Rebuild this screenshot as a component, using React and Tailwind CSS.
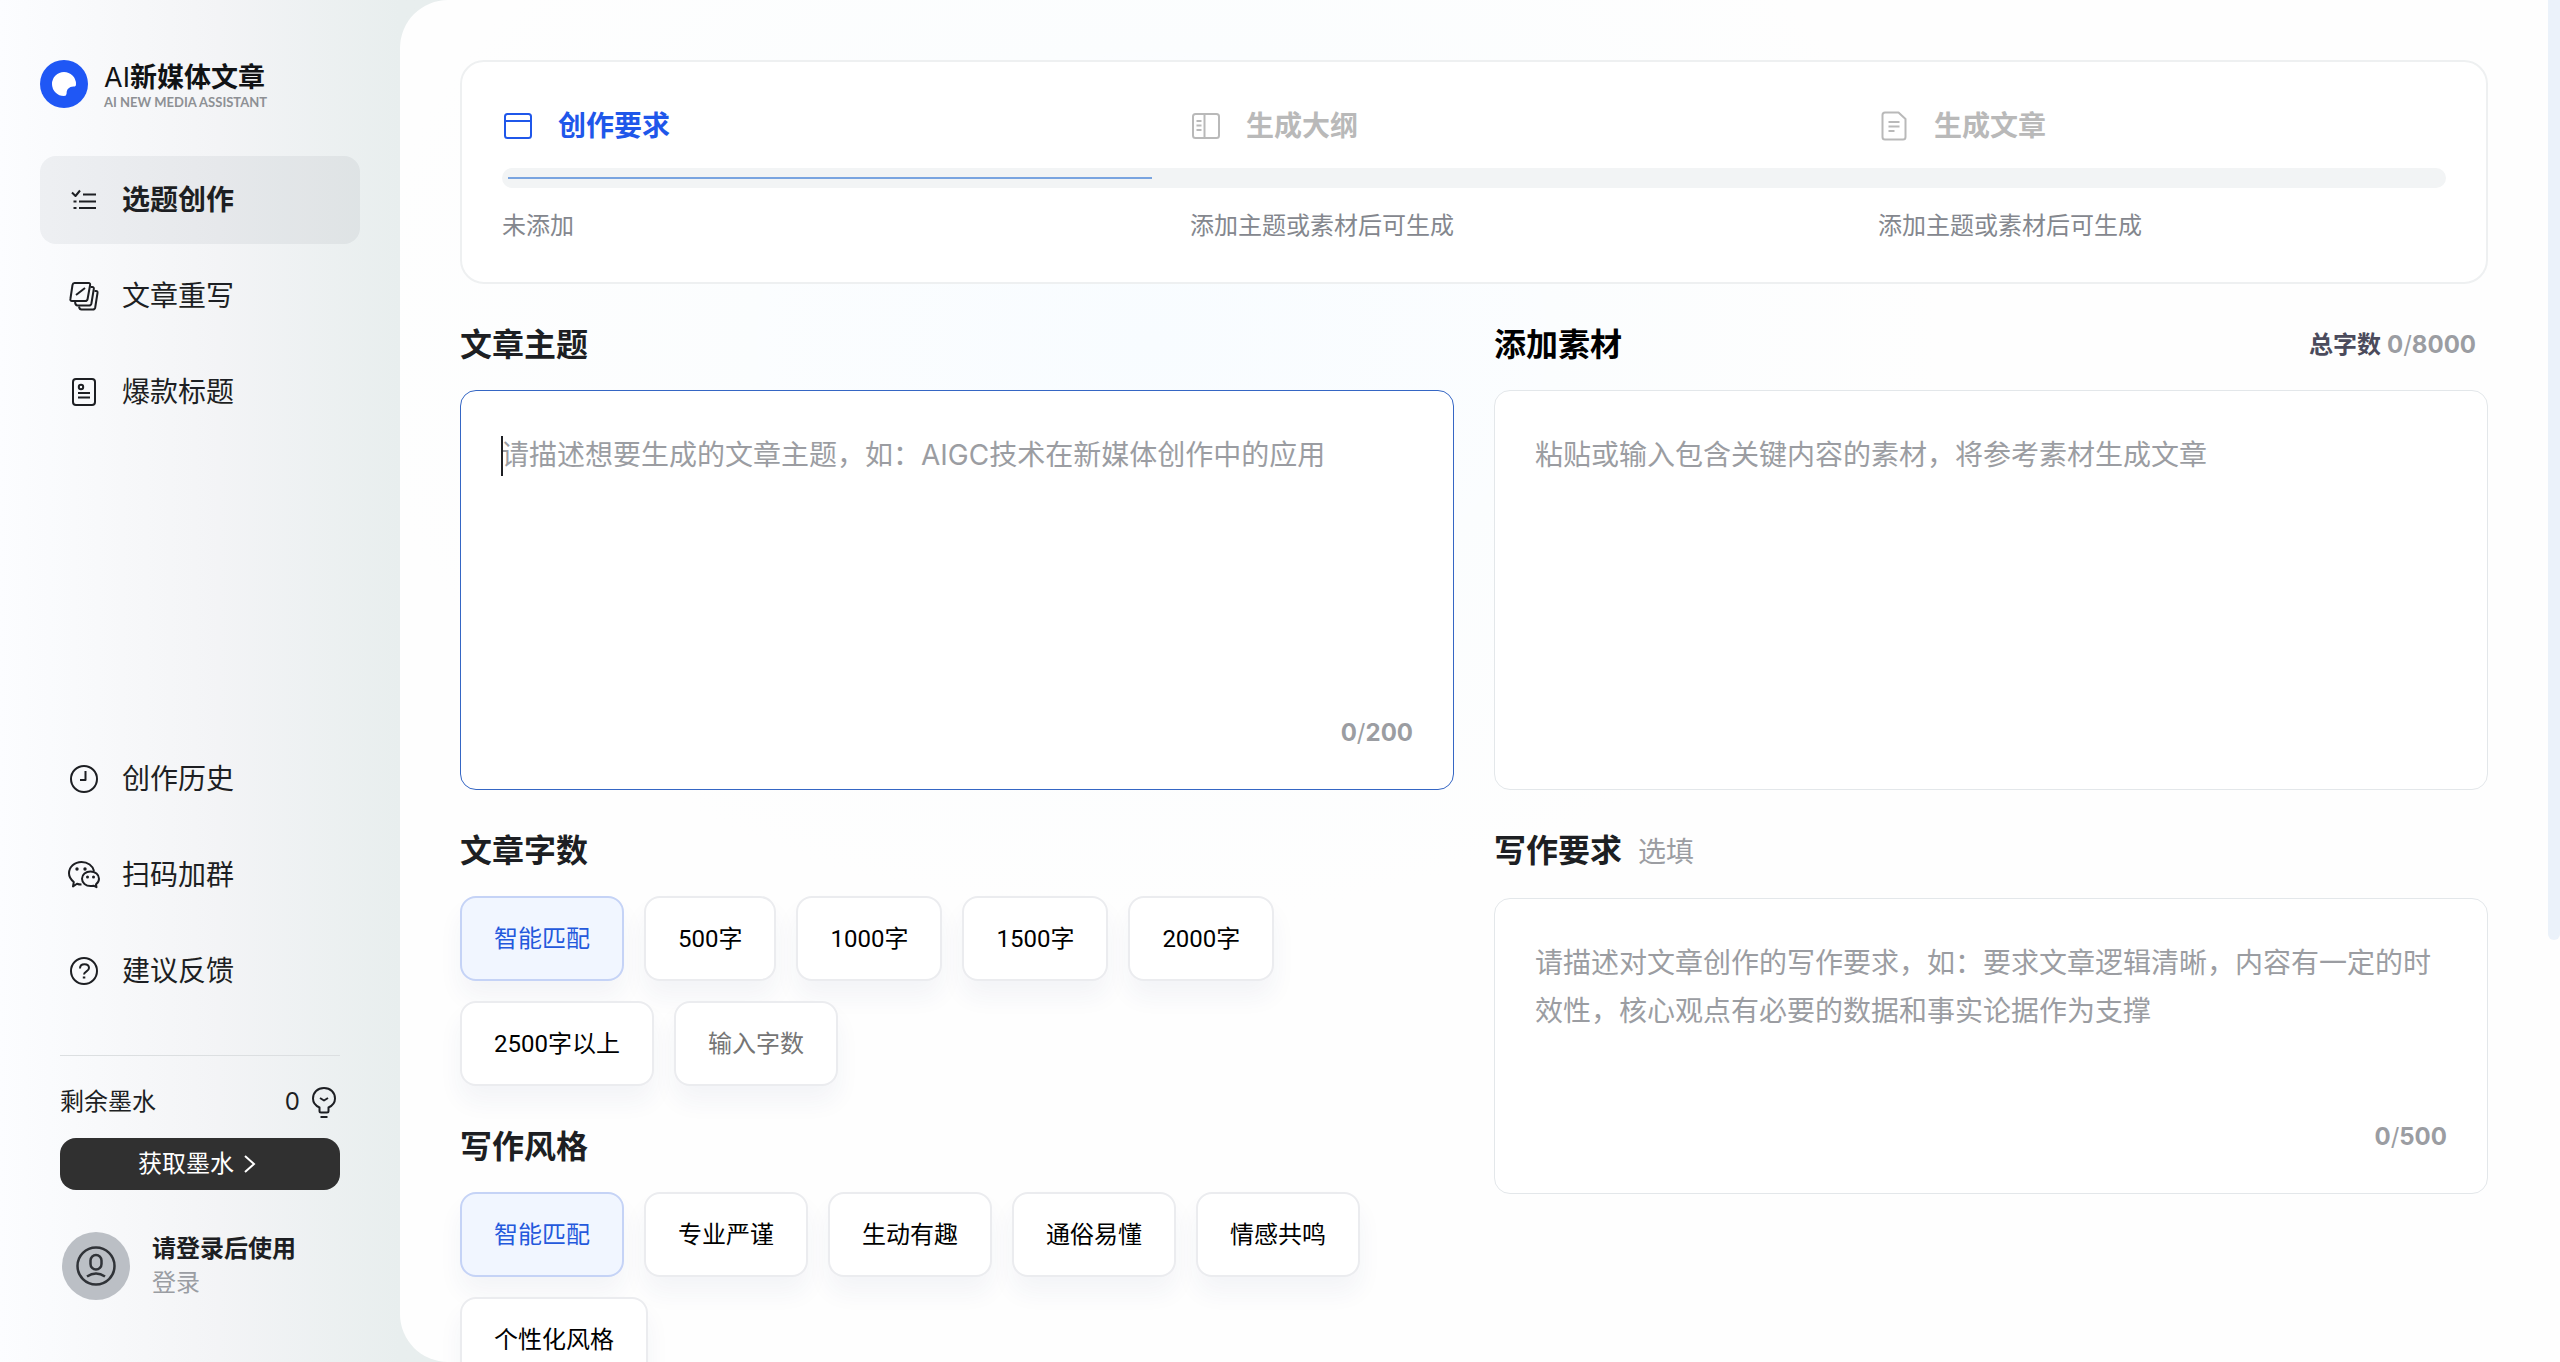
import { useState } from 'react'
import clsx from 'clsx'

const Icon = ({ children, className = 'w-8 h-8' }) => (
  <svg
    viewBox="0 0 32 32"
    fill="none"
    stroke="currentColor"
    strokeWidth="2"
    strokeLinejoin="round"
    className={clsx('shrink-0', className)}
    aria-hidden="true"
  >
    {children}
  </svg>
)

const icons = {
  topic: (
    <Icon>
      <path d="M4 8.500l3.500 3.500L12 6.500M15 10.500h13M11 17.500h17M11 24h17M5.500 17.500h3M5.500 24h3" />
    </Icon>
  ),
  rewrite: (
    <Icon>
      <path d="M6.500 3H20.500q2 0 1.600 2L19.600 19q-.4 2-2.400 2H4q-2 0-1.600-2L4.500 5q.4-2 2-2z" />
      <path d="M22.500 7h1.700q2 0 1.600 2L23.400 23.500q-.4 2-2.400 2H9.500q-2 0-2.500-3.500" />
      <path d="M26.500 11h1.500q1.900 0 1.500 2L27.200 27.500q-.4 2-2.400 2H13.500q-2 0-2.500-3" />
      <path d="M8 15l9-7" />
    </Icon>
  ),
  title: (
    <Icon>
      <rect x="5" y="3" width="22" height="26" rx="3" />
      <circle cx="13" cy="11" r="2.200" />
      <path d="M10 17h12M10 21.500h12" />
    </Icon>
  ),
  history: (
    <Icon>
      <circle cx="16" cy="16" r="13" />
      <path d="M17.500 8v9H12" />
    </Icon>
  ),
  wechat: (
    <Icon>
      <path d="M13.500 25.500c-1.600 0-3-.2-4.500-.8L5 27.500l.8-4.500C3 20.800 1 17.800 1 14.300 1 8 6.500 3 13.500 3c6.200 0 11.300 3.600 12.500 9" />
      <path d="M22.500 12.500c4.700 0 8.500 3.200 8.500 7.200 0 2.300-1.200 4.200-3 5.600l.5 2.900-3-1.500c-1 .2-2 .3-3 .3-4.700 0-8.500-3.200-8.500-7.300s3.800-7.200 8.500-7.200z" />
      <g fill="currentColor" stroke="none">
        <circle cx="9" cy="10" r="1.700" />
        <circle cx="17" cy="10" r="1.700" />
        <circle cx="19.500" cy="18" r="1.500" />
        <circle cx="25.500" cy="18" r="1.500" />
      </g>
    </Icon>
  ),
  help: (
    <Icon>
      <circle cx="16" cy="16" r="13" />
      <path d="M12 13.500c0-2.500 1.800-4.200 4.500-4.200s4.500 1.500 4.500 3.800c0 3.400-5 3-5 6.400" />
      <path d="M14.800 22.500h2.500" />
    </Icon>
  ),
  window: (
    <Icon>
      <rect x="3" y="4" width="26" height="24" rx="2.500" />
      <path d="M3 11h26" />
    </Icon>
  ),
  outline: (
    <Icon>
      <rect x="3" y="4" width="26" height="24" rx="2.500" />
      <path d="M14.500 4v24M6.500 11h5M6.500 15.500h5M6.500 20h5" />
    </Icon>
  ),
  article: (
    <Icon>
      <path d="M7 2.500h13.500L27.500 9v18q0 2.500-2.500 2.500H7q-2.500 0-2.500-2.500V5Q4.500 2.500 7 2.500z" />
      <path d="M10.500 12h11M10.500 16.500h11M10.500 21h6" />
    </Icon>
  )
}

const mainNav = [
  { label: '选题创作', icon: 'topic' },
  { label: '文章重写', icon: 'rewrite' },
  { label: '爆款标题', icon: 'title' }
]

const helpNav = [
  { label: '创作历史', icon: 'history' },
  { label: '扫码加群', icon: 'wechat' },
  { label: '建议反馈', icon: 'help' }
]

const steps = [
  { title: '创作要求', icon: 'window', hint: '未添加' },
  { title: '生成大纲', icon: 'outline', hint: '添加主题或素材后可生成' },
  { title: '生成文章', icon: 'article', hint: '添加主题或素材后可生成' }
]

const lengths = ['智能匹配', '500字', '1000字', '1500字', '2000字', '2500字以上']
const styles = ['智能匹配', '专业严谨', '生动有趣', '通俗易懂', '情感共鸣', '个性化风格']

const NavList = ({ items, active, onSelect }) => (
  <ul className="flex flex-col gap-2">
    {items.map((item) => (
      <li key={item.label}>
        <button
          type="button"
          onClick={() => onSelect(item.label)}
          className={clsx(
            'flex w-full h-[88px] items-center gap-[22px] rounded-2xl px-7 text-[28px] text-[#1d1f23]',
            active === item.label && 'bg-[#283040]/6 font-bold'
          )}
        >
          {icons[item.icon]}
          {item.label}
        </button>
      </li>
    ))}
  </ul>
)

const Sidebar = () => {
  const [active, setActive] = useState('选题创作')

  return (
    <aside className="flex w-[400px] shrink-0 flex-col px-10 pt-[60px] pb-[62px]">
      <div className="flex h-12 items-center gap-4">
        <svg viewBox="0 0 48 48" className="w-12 h-12 shrink-0" aria-hidden="true">
          <circle cx="24" cy="24" r="24" fill="#1f57f5" />
          <path
            d="M36 24A12 12 0 1 0 24 36q2.500 0 2.600-2.500C26.800 29 29 27 33.500 26.600 35.500 26.500 36 25.800 36 24z"
            fill="#fff"
          />
        </svg>
        <div className="pt-1 whitespace-nowrap">
          <div className="text-[27px] leading-8 text-[#111315]">
            AI<span className="font-bold">新媒体文章</span>
          </div>
          <div className="font-['Lato'] text-[13px] leading-4 font-bold text-[#8d9094]">AI NEW MEDIA ASSISTANT</div>
        </div>
      </div>

      <nav className="mt-12 flex flex-1 flex-col justify-between">
        <NavList items={mainNav} active={active} onSelect={setActive} />
        <NavList items={helpNav} active={active} onSelect={setActive} />
      </nav>

      <div className="mx-5 mt-10 border-t border-[#dcdfe1] pt-7 text-2xl text-[#1d1f23]">
        <div className="flex h-9 items-center justify-between">
          <span>剩余墨水</span>
          <span className="flex items-center gap-2">
            0
            <Icon className="w-8 h-8">
              <path d="M11.500 25v-3.500C7 19.500 5 16.500 5 12.500 5 6.500 9.500 2 16 2s11 4.500 11 10.500c0 4-2 7-6.500 9V25q0 1.500-1.500 1.500h-6q-1.500 0-1.500-1.500z" />
              <path d="M12 12l4 2.500 4-2.500M12.500 31h7" />
            </Icon>
          </span>
        </div>
        <button
          type="button"
          className="mt-[18px] flex h-[52px] w-full items-center justify-center gap-2 rounded-2xl bg-[#303030] text-white"
        >
          获取墨水
          <svg viewBox="0 0 20 24" className="w-5 h-6" fill="none" stroke="currentColor" strokeWidth="2" aria-hidden="true">
            <path d="M3 4l9 8-9 8" />
          </svg>
        </button>
      </div>

      <div className="mt-[42px] ml-[22px] flex items-center gap-[22px]">
        <div className="flex w-[68px] h-[68px] items-center justify-center rounded-full bg-[#bbbfc5]">
          <svg viewBox="0 0 40 40" className="w-10 h-10" fill="none" stroke="#303338" strokeWidth="2.500" aria-hidden="true">
            <circle cx="20" cy="20" r="18.500" />
            <rect x="14.500" y="9" width="11" height="14.500" rx="5.500" />
            <path d="M11 30.500q9-6 18 0" />
          </svg>
        </div>
        <div className="text-2xl leading-[34px]">
          <div className="font-bold text-[#1d1f23]">请登录后使用</div>
          <a href="#login" className="block text-[#9a9da3]">登录</a>
        </div>
      </div>
    </aside>
  )
}

const Steps = () => (
  <section className="rounded-3xl border-2 border-[#eef0f1] bg-white px-10 pt-[42px] pb-[38px]">
    <ol className="grid grid-cols-3 gap-x-[120px]">
      {steps.map((step, index) => (
        <li
          key={step.title}
          className={clsx(
            'flex h-11 items-center gap-6 text-[28px] font-bold',
            index === 0 ? 'text-[#1f57ea]' : 'text-[#b9b9b9]'
          )}
        >
          {icons[step.icon]}
          {step.title}
        </li>
      ))}
    </ol>
    <div className="mt-5 flex h-5 items-center rounded-full bg-[#f2f4f5] px-1.5">
      <div className="h-0.5 w-1/3 bg-[#79a4e0]" />
    </div>
    <div className="mt-5 grid grid-cols-3 gap-x-[120px] text-2xl leading-9 whitespace-nowrap text-[#84878e]">
      {steps.map((step) => (
        <span key={step.title}>{step.hint}</span>
      ))}
    </div>
  </section>
)

const Counter = ({ count, max }) => (
  <span className="font-bold text-[#9b9da2]">
    {count}
    <span className="font-normal">/</span>
    {max}
  </span>
)

const TextBox = ({ id, value, onChange, placeholder, max, height, focused, showCount = true }) => (
  <div
    className={clsx(
      'relative flex flex-col rounded-2xl border bg-white p-10',
      height,
      focused ? 'border-[#3566c4]' : 'border-[#e3e7ea]'
    )}
  >
    {/* text cursor of the empty focused box */}
    {focused && !value && <span className="absolute top-[45px] left-10 h-10 w-0.5 bg-[#1d1f23]" />}
    <textarea
      id={id}
      value={value}
      maxLength={max}
      onChange={(e) => onChange(e.target.value)}
      placeholder={placeholder}
      className="min-h-0 w-full flex-1 resize-none bg-transparent text-[28px] leading-[48px] text-[#1d1f23] outline-none placeholder:text-[#9b9da2]"
    />
    {showCount && (
      <div className="text-right text-2xl leading-8">
        <Counter count={value.length} max={max} />
      </div>
    )}
  </div>
)

const chip =
  "h-[85px] rounded-2xl border-2 px-8 font-['Roboto','Noto_Sans_CJK_SC',sans-serif] text-2xl whitespace-nowrap shadow-[0_16px_24px_rgba(40,60,110,0.05)]"

const ChipGroup = ({ options, value, onChange, children }) => (
  <div className="flex flex-wrap gap-5">
    {options.map((option) => (
      <button
        key={option}
        type="button"
        onClick={() => onChange(option)}
        aria-pressed={value === option}
        className={clsx(
          chip,
          value === option ? 'border-[#c5d3f6] bg-[#f1f6ff] text-[#2459dc]' : 'border-[#ebecef] bg-white text-black'
        )}
      >
        {option}
      </button>
    ))}
    {children}
  </div>
)

const heading = 'text-[32px] leading-[48px] font-bold'

const App = () => {
  const [topic, setTopic] = useState('')
  const [material, setMaterial] = useState('')
  const [requirement, setRequirement] = useState('')
  const [length, setLength] = useState('智能匹配')
  const [customLength, setCustomLength] = useState('')
  const [style, setStyle] = useState('智能匹配')

  return (
    <div className="flex h-screen overflow-hidden bg-linear-to-r from-[#fcfdff] via-[#f3f4f6] via-[220px] to-[#e8eeee] to-[400px] font-['Inter','Noto_Sans_CJK_SC',sans-serif]">
      <Sidebar />

      <main className="flex min-w-0 flex-1 overflow-hidden rounded-l-[48px] bg-[#fefefe]">
        <div className="min-w-0 flex-1 overflow-hidden bg-radial-[at_35%_25%] from-[#f8fcff] to-transparent to-40% px-[60px] pt-[60px]">
          <Steps />

          <div className="mt-[37px] grid grid-cols-2 gap-x-10">
            <div className="flex min-w-0 flex-col">
              <label htmlFor="topic" className={clsx(heading, 'mb-[21px] text-[#1d1f23]')}>文章主题</label>
              <TextBox
                id="topic"
                value={topic}
                onChange={setTopic}
                placeholder="请描述想要生成的文章主题，如：AIGC技术在新媒体创作中的应用"
                max={200}
                height="h-[400px]"
                focused
              />

              <h2 className={clsx(heading, 'mt-[37px] mb-[21px] text-[#1d1f23]')}>文章字数</h2>
              <ChipGroup options={lengths} value={length} onChange={setLength}>
                <input
                  type="text"
                  aria-label="输入字数"
                  value={customLength}
                  onChange={(e) => setCustomLength(e.target.value)}
                  placeholder="输入字数"
                  className={clsx(chip, 'w-[164px] border-[#ebecef] bg-white outline-none placeholder:text-[#757575]')}
                />
              </ChipGroup>

              <h2 className={clsx(heading, 'mt-[37px] mb-[21px] text-[#1d1f23]')}>写作风格</h2>
              <ChipGroup options={styles} value={style} onChange={setStyle} />
            </div>

            <div className="flex min-w-0 flex-col">
              <div className="mb-[21px] flex items-center justify-between">
                <label htmlFor="material" className={clsx(heading, 'text-black')}>添加素材</label>
                <div className="flex gap-1.5 pr-3 text-2xl font-bold text-[#4b4b5c]">
                  总字数
                  <Counter count={material.length} max={8000} />
                </div>
              </div>
              <TextBox
                id="material"
                value={material}
                onChange={setMaterial}
                placeholder="粘贴或输入包含关键内容的素材，将参考素材生成文章"
                max={8000}
                height="h-[400px]"
                showCount={false}
              />

              <label htmlFor="requirement" className={clsx(heading, 'mt-[37px] mb-[22px] text-[#1d1f23]')}>
                写作要求
                <span className="ml-4 text-[28px] font-normal text-[#9b9da2]">选填</span>
              </label>
              <TextBox
                id="requirement"
                value={requirement}
                onChange={setRequirement}
                placeholder="请描述对文章创作的写作要求，如：要求文章逻辑清晰，内容有一定的时效性，核心观点有必要的数据和事实论据作为支撑"
                max={500}
                height="h-[296px]"
              />
            </div>
          </div>
        </div>

        {/* Scrollbar */}
        <div className="w-3 shrink-0">
          <div className="h-[69%] rounded-b-full bg-[#ebf2fa]" />
        </div>
      </main>
    </div>
  )
}

export default App
